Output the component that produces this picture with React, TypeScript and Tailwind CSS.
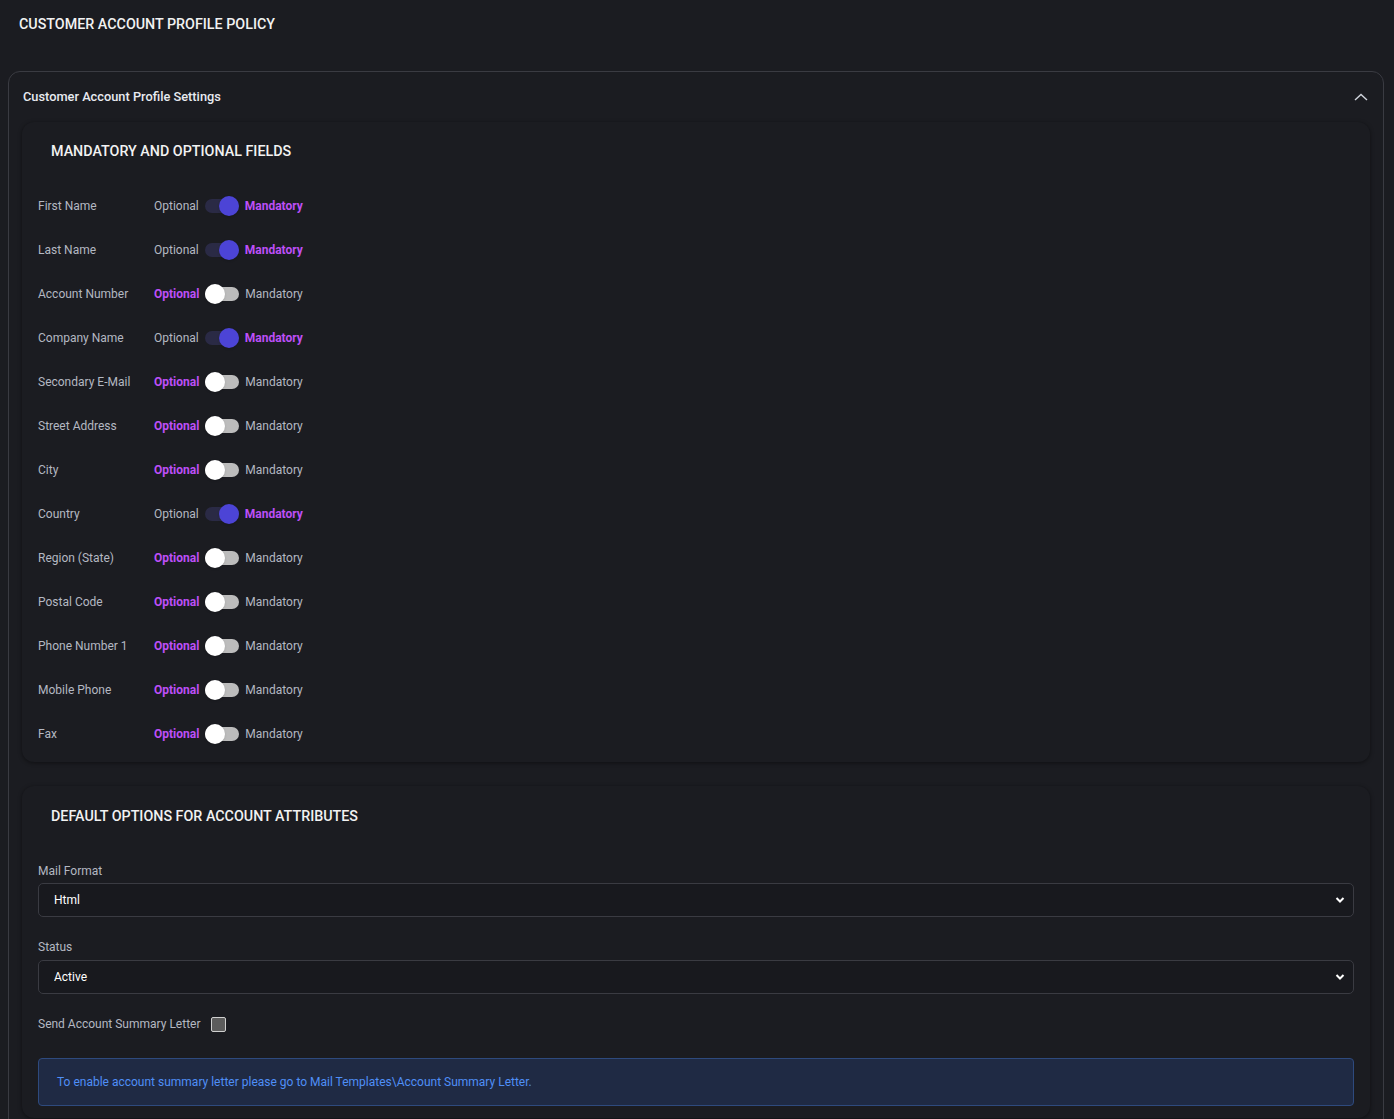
import React, { useState } from "react";

const fields: { name: string; mandatory: boolean }[] = [
  { name: "First Name", mandatory: true },
  { name: "Last Name", mandatory: true },
  { name: "Account Number", mandatory: false },
  { name: "Company Name", mandatory: true },
  { name: "Secondary E-Mail", mandatory: false },
  { name: "Street Address", mandatory: false },
  { name: "City", mandatory: false },
  { name: "Country", mandatory: true },
  { name: "Region (State)", mandatory: false },
  { name: "Postal Code", mandatory: false },
  { name: "Phone Number 1", mandatory: false },
  { name: "Mobile Phone", mandatory: false },
  { name: "Fax", mandatory: false },
];

function Toggle({ on, onClick }: { on: boolean; onClick: () => void }) {
  return (
    <button
      type="button"
      onClick={onClick}
      className="relative mx-[6px] h-[20px] w-[34px] shrink-0"
      aria-pressed={on}
    >
      {/* track */}
      <span
        className={
          on
            ? "absolute left-0 right-0 top-[3px] h-[14px] rounded-full bg-[#2a2a45]"
            : "absolute left-0 right-0 top-[3px] h-[14px] rounded-full bg-[#bcbcbc]"
        }
      />
      {/* thumb */}
      <span
        className={
          on
            ? "absolute top-0 left-[14px] h-[20px] w-[20px] rounded-full bg-[#4c44d6] shadow"
            : "absolute top-0 left-0 h-[20px] w-[20px] rounded-full bg-white shadow"
        }
      />
    </button>
  );
}

function FieldRow({ name, initial }: { name: string; initial: boolean }) {
  const [on, setOn] = useState(initial);
  return (
    <div className="flex h-[44px] items-center text-[12px]">
      <div className="w-[116px] text-[#b4b8c2]">{name}</div>
      <span className={on ? "text-[#b4b8c2]" : "font-bold text-[#bd4ff7]"}>Optional</span>
      <Toggle on={on} onClick={() => setOn(!on)} />
      <span className={on ? "font-bold text-[#bd4ff7]" : "text-[#b4b8c2]"}>Mandatory</span>
    </div>
  );
}

function Select({ value, options }: { value: string; options: string[] }) {
  return (
    <div className="relative">
      <select
        defaultValue={value}
        className="h-[34px] w-full appearance-none rounded-[5px] border border-[#3a3b42] bg-[#18191e] pl-[15px] text-[12px] text-white outline-none"
      >
        {options.map((o) => (
          <option key={o}>{o}</option>
        ))}
      </select>
      <svg
        className="pointer-events-none absolute right-[9px] top-[13px]"
        width="10"
        height="8"
        viewBox="0 0 10 8"
      >
        <polyline points="1.5,2 5,5.5 8.5,2" fill="none" stroke="white" strokeWidth="2" />
      </svg>
    </div>
  );
}

export default function App() {
  const [open, setOpen] = useState(true);
  return (
    <div
      className="min-h-screen bg-[#1b1c21] pb-[20px] text-white"
      style={{ fontFamily: "Roboto, 'Liberation Sans', sans-serif" }}
    >
      {/* page title */}
      <div className="px-[19px] pt-[15px] text-[14.3px] font-medium leading-[18px] text-[#f2f2f2]">
        CUSTOMER ACCOUNT PROFILE POLICY
      </div>

      {/* settings panel */}
      <div className="ml-[8px] mr-[10px] mt-[38px] rounded-[12px] border border-[#3a3b42] bg-[#1b1c21]">
        <button
          type="button"
          onClick={() => setOpen(!open)}
          className="flex h-[50px] w-full items-center justify-between pl-[14px] pr-[15px]"
        >
          <span className="text-[12.8px] font-medium text-[#e8eaf0]">
            Customer Account Profile Settings
          </span>
          <svg width="14" height="8" viewBox="0 0 14 8" className={open ? "" : "rotate-180"}>
            <polyline points="1,7 7,1.5 13,7" fill="none" stroke="#d0d4dc" strokeWidth="1.4" />
          </svg>
        </button>

        {open && (
          <div className="flex flex-col gap-[24px] px-[13px] pb-[14px]">
            {/* mandatory / optional */}
            <div className="rounded-[12px] bg-[#1b1c21] px-[16px] pb-[6px] pt-[20px] shadow-[0_1px_4px_rgba(0,0,0,0.45)]">
              <div className="pl-[13px] text-[14.3px] font-medium leading-[18px] text-[#f2f2f2]">
                MANDATORY AND OPTIONAL FIELDS
              </div>
              <div className="mt-[24px] flex flex-col">
                {fields.map((f) => (
                  <FieldRow key={f.name} name={f.name} initial={f.mandatory} />
                ))}
              </div>
            </div>

            {/* default options */}
            <div className="rounded-[12px] bg-[#1b1c21] px-[16px] pb-[12px] pt-[21px] shadow-[0_1px_4px_rgba(0,0,0,0.45)]">
              <div className="pl-[13px] text-[14.3px] font-medium leading-[18px] text-[#f2f2f2]">
                DEFAULT OPTIONS FOR ACCOUNT ATTRIBUTES
              </div>

              <div className="mt-[38px] text-[12px] leading-[16px] text-[#b4b8c2]">Mail Format</div>
              <div className="mt-[4px]">
                <Select value="Html" options={["Html", "Text"]} />
              </div>

              <div className="mt-[22px] text-[12px] leading-[16px] text-[#b4b8c2]">Status</div>
              <div className="mt-[5px]">
                <Select value="Active" options={["Active", "Inactive"]} />
              </div>

              <label className="mt-[21px] flex items-center gap-[10px] text-[12px] text-[#b4b8c2]">
                Send Account Summary Letter
                <input
                  type="checkbox"
                  className="h-[15px] w-[15px] appearance-none rounded-[2px] border border-[#d0d0d0] bg-[#5c5c5c]"
                />
              </label>

              <div className="mt-[25px] flex h-[48px] items-center rounded-[4px] border border-[#2e4a7e] bg-[#1f2a44] px-[18px] text-[12px] text-[#4f8ff7]">
                To enable account summary letter please go to Mail Templates\Account Summary Letter.
              </div>
            </div>
          </div>
        )}
      </div>
    </div>
  );
}
